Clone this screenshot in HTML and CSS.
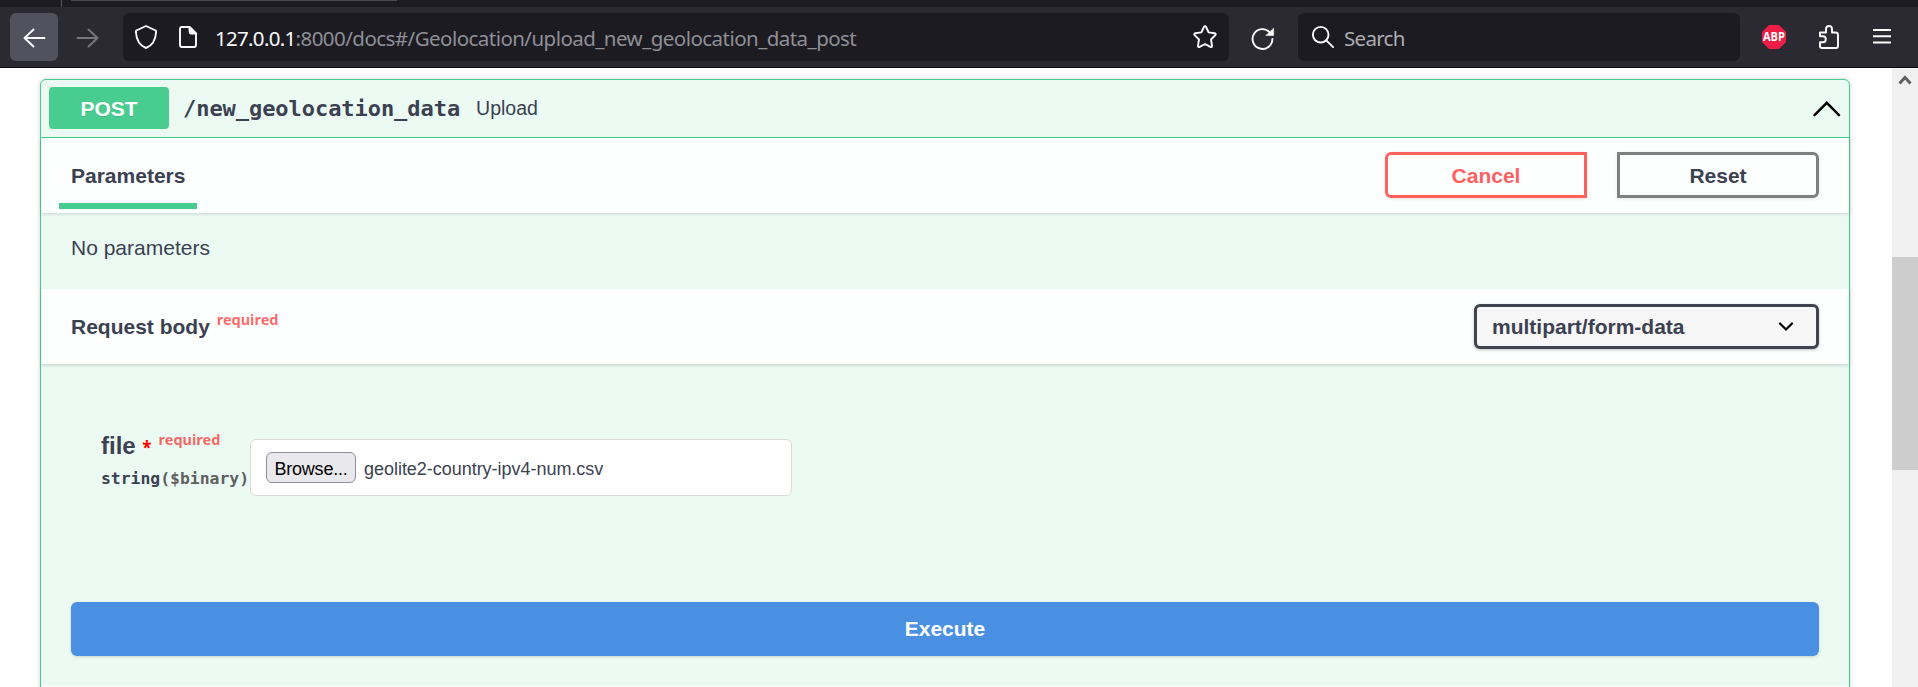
FILE: index.html
```html
<!DOCTYPE html>
<html lang="en">
<head>
<meta charset="utf-8">
<title>Geolocation API docs</title>
<link rel="stylesheet" href="styles.css">
</head>
<body>
<div class="window">
  <div class="tabstrip"><span class="tab-divider"></span><span class="tab"></span></div>
  <header class="toolbar">
    <button class="nav back" aria-label="Back"><svg width="24" height="24" viewBox="0 0 24 24"><path d="M22.500 12H2.500M11.500 3.500L2.500 12l9 8.500"/></svg></button>
    <button class="nav forward" aria-label="Forward"><svg width="24" height="24" viewBox="0 0 24 24"><path d="M1.500 12h20M12.500 3.500l9 8.500-9 8.500"/></svg></button>
    <div class="field address">
      <svg class="shield" width="24" height="26" viewBox="0 0 24 26"><path d="M12 2L21.700 6.500Q22.200 6.900 22.100 8C21.600 16 18.500 21.600 12 24C5.500 21.600 2.400 16 1.900 8Q1.800 6.900 2.300 6.500Z"/></svg>
      <svg class="page-icon" width="20" height="24" viewBox="0 0 20 24"><path d="M11.500 2H4Q2 2 2 4v16q0 2 2 2h12q2 0 2-2V8.500z"/><path class="fill" d="M11 1.500h1L18.800 8.500v.7H13q-2 0-2-2z"/></svg>
      <span class="url"><b>127.0.0.1</b>:8000/docs#/Geolocation/upload_new_geolocation_data_post</span>
      <svg class="star" width="26" height="26" viewBox="0 0 26 26"><path d="M11.900 3q1.100-1.800 2.200 0l2.500 5.400 6 .8q1.900.5.700 2l-4.300 4.300 1 6.200q0 1.900-1.700 1.200L13 20l-5.300 2.900q-1.700.7-1.700-1.200l1-6.200-4.300-4.300q-1.200-1.500.7-2l6-.8z"/></svg>
    </div>
    <svg class="reload" width="24" height="24" viewBox="0 0 24 24"><path d="M21.400 12A9.900 9.900 0 1 1 18.800 5.300"/><path class="fill" d="M22.600 1.500v7h-7.500z"/></svg>
    <div class="field search">
      <svg width="24" height="24" viewBox="0 0 24 24"><circle cx="9.700" cy="9.700" r="7.800"/><path d="M15.300 15.300l6.800 6.800"/></svg>
      <span>Search</span>
    </div>
    <svg class="abp" width="24" height="24" viewBox="0 0 24 24"><path d="M7 0h10l7 7v10l-7 7H7l-7-7V7z"/><text x="12" y="16.300" textLength="22" lengthAdjust="spacingAndGlyphs">ABP</text></svg>
    <svg class="puzzle" width="22" height="26" viewBox="0 0 22 26"><path d="M2 8.500h6V5Q8 2 11 2t3 3v3.500h3.500q2.500 0 2.500 2.500v11q0 2-2 2H4q-2 0-2-2v-3.800h3q2.800 0 2.800-3T5 12.200H2z"/></svg>
    <svg class="menu" width="18" height="18" viewBox="0 0 18 18"><path d="M0 2h18M0 8.200h18M0 14.500h18"/></svg>
  </header>
  <div class="viewport">
    <main class="docs">
      <section class="operation">
        <div class="summary">
          <span class="method">POST</span>
          <code class="path">/new_geolocation_data</code>
          <span class="description">Upload</span>
          <svg class="chevron-up" width="28" height="16" viewBox="0 0 28 16"><path d="M1.500 14.200L13.800 1.800l12.200 12.400"/></svg>
        </div>
        <div class="section-header params">
          <h4 class="tab-title">Parameters</h4>
          <div class="actions"><button class="btn cancel">Cancel</button><button class="btn reset">Reset</button></div>
        </div>
        <div class="no-params">No parameters</div>
        <div class="section-header body-header">
          <h4>Request body <sup>required</sup></h4>
          <div class="select"><span>multipart/form-data</span><svg width="16" height="10" viewBox="0 0 16 10"><path d="M2 1.500l6 6 6-6"/></svg></div>
        </div>
        <div class="form-row">
          <div class="param">
            <div class="param-name">file <i>*</i><sup>required</sup></div>
            <div class="param-type">string<span>($binary)</span></div>
          </div>
          <div class="file-input"><button class="browse">Browse...</button><span class="filename">geolite2-country-ipv4-num.csv</span></div>
        </div>
        <button class="execute">Execute</button>
        <div class="responses"></div>
      </section>
    </main>
    <aside class="scrollbar"><svg width="14" height="12" viewBox="0 0 14 12"><path d="M1.500 9.500L7 3.500l5.500 6"/></svg><div class="thumb"></div></aside>
  </div>
</div>
</body>
</html>
```
FILE: styles.css
```css
* { box-sizing: border-box; }
body { margin: 0; font-family: "Liberation Sans", Arial, sans-serif; color: #3b4151; background: #fff; overflow: hidden; }
button { font-family: inherit; padding: 0; margin: 0; border: 0; }
h4 { margin: 0; font-size: 21px; line-height: 24px; }
svg { display: block; flex: none; }
.window { height: 687px; display: flex; flex-direction: column; overflow: hidden; }

.tabstrip { flex: none; height: 7px; background: #1c1b22; display: flex; }
.tab-divider { width: 1px; height: 7px; margin-left: 61px; background: #54535c; }
.tab { width: 326px; height: 1px; margin-left: 9px; background: #4a4954; }
.toolbar { flex: none; height: 61px; background: #2b2a33; border-bottom: 1px solid #0c0c0d; display: flex; align-items: center; padding-left: 10px; }
.toolbar svg { fill: none; stroke: #fbfbfe; stroke-width: 1.9; stroke-linecap: round; stroke-linejoin: round; }
.toolbar svg .fill { fill: #fbfbfe; stroke-width: .6; }
.nav { width: 48px; height: 48px; display: flex; align-items: center; justify-content: center; border-radius: 6px; background: none; }
.nav.back { background: #52525e; }
.nav.back svg, .nav.forward svg { margin-top: 2px; }
.nav.forward { margin-left: 6px; }
.toolbar .forward svg { stroke: #77767f; }
.field { height: 48px; border-radius: 6px; background: #1c1b22; display: flex; align-items: center; font-family: "Noto Sans", sans-serif; }
.address { width: 1106px; margin-left: 11px; padding: 0 11px; }
.page-icon { margin-left: 20px; }
.url { margin-left: 17px; padding-top: 2px; flex: 1; font-size: 20.5px; letter-spacing: -.54px; color: #8f8f96; white-space: nowrap; }
.url b { font-weight: 400; color: #fbfbfe; letter-spacing: -.7px; }
.reload { margin-left: 22px; margin-top: 4px; }
.search { width: 442px; margin-left: 23px; padding-left: 13px; font-size: 20.5px; color: #adadb2; }
.search span { margin-left: 9px; padding-top: 2px; letter-spacing: -.7px; }
.toolbar .abp { margin-left: 22px; margin-bottom: 1px; stroke: none; }
.abp path { fill: #ed1e45; }
.abp text { fill: #fff; font: bold 12px "Open Sans", sans-serif; text-anchor: middle; }
.puzzle { margin-left: 32px; }
.menu { margin-left: 33px; margin-bottom: 1px; }

.viewport { flex: 1; display: flex; min-height: 0; }
.docs { flex: 1; padding: 11px 42px 0 40px; }
.operation { height: 640px; border: 1px solid #49cc90; border-radius: 6px; background: #ebfaf3; box-shadow: 0 0 4px rgba(0,0,0,.19); }
.summary { height: 58px; border-bottom: 1px solid #49cc90; display: flex; align-items: center; padding: 0 8px 0 8px; }
.method { width: 120px; height: 42px; margin-bottom: 2px; border-radius: 4px; background: #49cc90; color: #fff; font-weight: 700; font-size: 21px; line-height: 43px; text-align: center; text-shadow: 0 1px 0 rgba(0,0,0,.1); }
.path { margin-left: 14px; font: bold 22px "DejaVu Sans Mono", monospace; letter-spacing: -.05px; }
.description { margin-left: 16px; font-size: 19.5px; }
.chevron-up { margin-left: auto; }
.chevron-up path { fill: none; stroke: #000; stroke-width: 2.4; stroke-linecap: round; }
.section-header { height: 75px; background: rgba(255,255,255,.85); box-shadow: 0 1px 3px rgba(0,0,0,.15); display: flex; justify-content: space-between; align-items: center; padding: 0 30px; }
.tab-title { align-self: stretch; margin-left: -12px; width: 138px; padding: 26px 0 0 12px; height: 71px; border-bottom: 6px solid #49cc90; }
.actions { display: flex; gap: 30px; margin-bottom: 1px; }
.btn { width: 202px; height: 46px; padding-top: 2px; border: 3px solid gray; background: transparent; color: #3b4151; font-weight: 700; font-size: 21px; box-shadow: 0 1px 3px rgba(0,0,0,.1); }
.cancel { border-color: #ff6060; color: #ff6060; border-radius: 6px 0 0 6px; }
.reset { border-radius: 0 6px 6px 0; }
.no-params { height: 76px; padding: 23px 30px; font-size: 21px; line-height: 24px; }
sup { color: rgba(255,0,0,.6); font: bold 14.500px "Noto Sans", sans-serif; line-height: 0; vertical-align: 9px; }
.body-header { box-shadow: 0 2px 3px rgba(0,0,0,.13); }
.body-header sup { margin-left: 1px; }
.select { width: 345px; height: 45px; border: 3px solid #41444e; border-radius: 6px; background: #f7f7f7; box-shadow: 0 1px 3px rgba(0,0,0,.25); display: flex; align-items: center; justify-content: space-between; padding: 0 22px 0 15px; font-weight: 700; font-size: 21px; }
.select svg path { fill: none; stroke: #000; stroke-width: 2.2; stroke-linecap: round; }
.form-row { display: flex; height: 238px; padding: 75px 0 0 60px; }
.param { width: 149px; white-space: nowrap; }
.param-name { font-size: 24px; line-height: 28px; font-weight: 700; margin-top: -7px; }
.param-name i { color: red; font: bold 17px/1 "Noto Sans", sans-serif; }
.param-name sup { margin-left: 7px; }
.param-type { margin-top: 7px; font: bold 16.400px/24px "DejaVu Sans Mono", monospace; }
.param-type span { color: #606060; }
.file-input { width: 542px; height: 57px; border: 1px solid #d9d9d9; border-radius: 6px; background: #fff; display: flex; align-items: center; padding-left: 15px; }
.browse { width: 90px; height: 31px; border: 1px solid #8f8f9d; border-radius: 6px; background: #e9e9ed; color: #000; font-size: 18px; letter-spacing: -.2px; padding-top: 3px; }
.filename { margin-left: 8px; padding-top: 3px; font-size: 18px; letter-spacing: -.03px; }
.execute { display: block; width: 1748px; height: 54px; margin: 0 0 0 30px; border-radius: 6px; background: #4990e2; color: #fff; font-weight: 700; font-size: 21px; box-shadow: 0 1px 3px rgba(0,0,0,.15); }
.responses { margin-top: 30px; height: 20px; background: rgba(255,255,255,.85); }
.scrollbar { width: 26px; background: #f0f0f0; display: flex; flex-direction: column; align-items: center; padding-top: 6px; }
.scrollbar path { fill: none; stroke: #606060; stroke-width: 3; }
.thumb { width: 26px; height: 213px; margin-top: 171px; background: #cdcdcd; }
```
